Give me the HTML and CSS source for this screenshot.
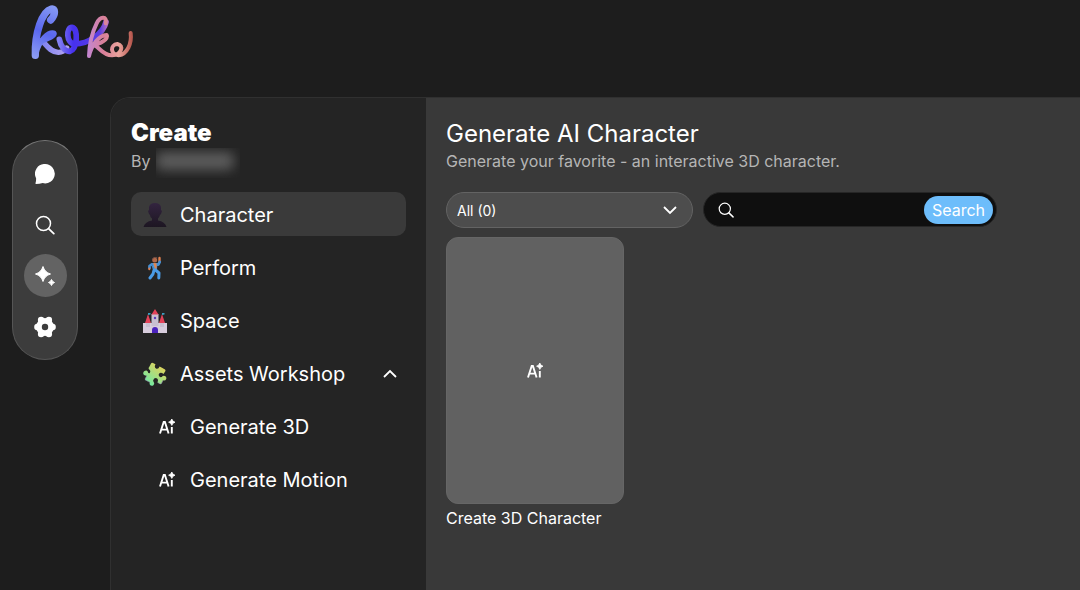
FILE: index.html
```html
<!DOCTYPE html>
<html lang="en">
<head>
  <meta charset="UTF-8">
  <meta name="viewport" content="width=device-width, initial-scale=1">
  <title>Generate AI Character</title>
  <link rel="stylesheet" href="styles.css">
</head>
<body>
  <svg class="sprite" aria-hidden="true">
    <symbol id="ai" viewBox="0 0 16 16">
      <path d="M1 14.5 4.7 3h1.200l3.700 11.500M2.300 10.600h6M12.800 8v6.500" fill="none" stroke="currentColor" stroke-width="1.900"/>
      <path d="M12.800 0q.6 2.600 3.200 3.200-2.600.6-3.200 3.200-.6-2.600-3.200-3.200 2.600-.6 3.200-3.200z" fill="currentColor" stroke="currentColor" stroke-width=".8"/>
    </symbol>
    <symbol id="search" viewBox="0 0 20 20">
      <circle cx="8.5" cy="8.5" r="7" fill="none" stroke="currentColor" stroke-width="1.5"/>
      <path d="m13.6 13.6 5.2 5" fill="none" stroke="currentColor" stroke-width="1.8" stroke-linecap="round"/>
    </symbol>
  </svg>

  <header class="header">
    <a class="logo" href="#" aria-label="Home">
      <svg viewBox="0 0 390 210" fill="none" stroke-linecap="round" stroke-linejoin="round">
        <defs>
          <linearGradient id="k1" gradientUnits="userSpaceOnUse" x1="40" y1="170" x2="105" y2="25">
            <stop offset="0" stop-color="#8c9cf4"/>
            <stop offset=".5" stop-color="#5a67ee"/>
            <stop offset="1" stop-color="#8497f4"/>
          </linearGradient>
          <linearGradient id="k2" gradientUnits="userSpaceOnUse" x1="60" y1="0" x2="135" y2="0">
            <stop offset="0" stop-color="#7b80f0"/>
            <stop offset="1" stop-color="#b0a2f0"/>
          </linearGradient>
          <linearGradient id="k3" gradientUnits="userSpaceOnUse" x1="115" y1="0" x2="262" y2="0">
            <stop offset="0" stop-color="#8583f2"/>
            <stop offset=".3" stop-color="#4631ee"/>
            <stop offset=".85" stop-color="#5b3fe0"/>
            <stop offset="1" stop-color="#b46cc8"/>
          </linearGradient>
          <linearGradient id="k4" gradientUnits="userSpaceOnUse" x1="205" y1="0" x2="335" y2="0">
            <stop offset="0" stop-color="#c486cf"/>
            <stop offset=".35" stop-color="#d97f98"/>
            <stop offset=".7" stop-color="#eaa39c"/>
            <stop offset="1" stop-color="#b85a50"/>
          </linearGradient>
        </defs>
        <path d="M66 122C78 134 92 158 116 157C128 157 134 152 140 144" stroke="url(#k2)" stroke-width="16"/>
        <path d="M92 60C108 42 106 24 94 27C66 34 44 100 46 166" stroke="url(#k1)" stroke-width="22"/>
        <path d="M48 160C58 118 86 96 101 99C108 106 82 116 68 122" stroke="url(#k1)" stroke-width="16"/>
        <path d="M118 118C122 138 134 156 150 154C172 148 176 84 156 82C138 82 138 130 164 132C206 132 250 100 258 66" stroke="url(#k3)" stroke-width="17"/>
        <path d="M257 70C262 46 240 50 230 70C216 98 208 138 207 168C214 136 236 106 260 105C268 116 238 134 222 134C236 140 248 166 276 166C304 164 314 136 292 132C270 134 270 164 296 166C322 162 336 130 332 99" stroke="url(#k4)" stroke-width="12"/>
      </svg>
    </a>
  </header>

  <div class="layout">
    <div class="side">
      <nav class="rail" aria-label="Main">
        <a class="rail-link" href="#" aria-label="Chat">
          <svg width="20" height="20" viewBox="0 0 20 20" fill="currentColor"><path d="M10.300 0a9.700 9.700 0 1 1-2.600 19.100Q4.500 20 1 20q-.8 0-.5-.8.700-1.900.6-5A9.700 9.700 0 0 1 10.300 0z"/></svg>
        </a>
        <a class="rail-link" href="#" aria-label="Search">
          <svg width="20" height="20"><use href="#search"/></svg>
        </a>
        <a class="rail-link active" href="#" aria-label="Create">
          <svg width="22" height="22" viewBox="0 0 22 22" fill="currentColor" stroke="currentColor" stroke-linejoin="round"><path d="M9 1.500q1.700 5.800 7.500 7.500-5.800 1.700-7.500 7.500-1.700-5.800-7.500-7.500 5.800-1.700 7.500-7.500zM17.500 14.500q.7 2.300 3 3-2.300.7-3 3-.7-2.300-3-3 2.300-.7 3-3z"/></svg>
        </a>
        <a class="rail-link" href="#" aria-label="Settings">
          <svg width="22" height="22" viewBox="0 0 22 22" fill="currentColor">
            <circle cx="11" cy="11" r="9"/>
            <circle cx="18.600" cy="11" r="3.200"/>
            <circle cx="3.400" cy="11" r="3.200"/>
            <circle cx="14.900" cy="4" r="3.200"/>
            <circle cx="7.100" cy="4" r="3.200"/>
            <circle cx="14.900" cy="18" r="3.200"/>
            <circle cx="7.100" cy="18" r="3.200"/>
            <circle cx="11" cy="11" r="3.200" fill="#3c3c3c"/>
          </svg>
        </a>
      </nav>
    </div>

    <div class="panel">
      <aside class="menu">
        <h1 class="menu-title">Create</h1>
        <p class="author">By <span class="author-name"></span></p>
        <nav class="menu-list" aria-label="Create">
          <a class="menu-item selected" href="#">
            <svg width="24" height="24" viewBox="0 0 24 24">
              <defs><linearGradient id="bust" x1="0" y1="0" x2="0" y2="1"><stop offset="0" stop-color="#33243f"/><stop offset="1" stop-color="#1d1622"/></linearGradient></defs>
              <path d="M6 4q1-4 6-4t6 4v3l1 1-1 3-1 1q-1 3-2 3.500v2q7 1 8.500 6.500H0.500Q2 18.500 9 17.500v-2Q7 14 7 12l-1-1-1-3 1-1z" fill="url(#bust)"/>
            </svg>
            Character
          </a>
          <a class="menu-item" href="#">
            <svg width="24" height="24" viewBox="0 0 24 24" fill="none" stroke-linecap="round" stroke-linejoin="round">
              <path d="M16.500 5.500V2" stroke="#e0804f" stroke-width="2.400"/>
              <path d="M12 8.500 15.500 8.500l1.200-2.500M8.500 8.500l-2 1.500v2" stroke="#458ed2" stroke-width="2.800"/>
              <path d="M6.300 12.500v.8" stroke="#e0804f" stroke-width="2"/>
              <path d="M9 7.500h5l-.5 5.500h-3z" fill="#4698df" stroke="#458ed2"/>
              <path d="m10.200 7 3.300.2.200 5.300-1.700.5z" fill="#e08550"/>
              <circle cx="11.700" cy="4" r="2.500" fill="#b0694a"/>
              <path d="M9.600 3q1-2.500 4.300-1.200" stroke="#7a5248"/>
              <path d="m11 14-1 4-3 4M12.500 14l3.500 3-.2 5" stroke="#4a9be6" stroke-width="3"/>
            </svg>
            Perform
          </a>
          <a class="menu-item" href="#">
            <svg width="24" height="24" viewBox="0 0 24 24">
              <path d="M0 14h3v1.500h2V14h14v1.500h2V14h3v10H0z" fill="#d8cddd"/>
              <path d="M3 13h4v5H3zM17 13h4v5h-4zM8.500 5h7v12h-7z" fill="#c9bfd1"/>
              <path d="M12 0l3.500 5.500h-7zM5 5l3 9H2zM19 5l3 9h-6z" fill="#e34259"/>
              <path d="M5 6V4h2.500v1.500zM19 6V4h2.500v1.500z" fill="#3c9fc0"/>
              <path d="M9 24v-3a3 3 0 0 1 6 0v3z" fill="#4a22bd"/>
              <circle cx="12" cy="9" r="1.200" fill="#5c3bb8"/>
            </svg>
            Space
          </a>
          <a class="menu-item" href="#">
            <svg width="24" height="24" viewBox="0 0 24 24">
              <defs><linearGradient id="puzzle" gradientUnits="userSpaceOnUse" x1="20" y1="2" x2="4" y2="22"><stop offset="0" stop-color="#ecd055"/><stop offset="1" stop-color="#6eeaa4"/></linearGradient></defs>
              <path d="M6.500 4.500 8 1.500q.8-1 2-.5l2.500 1.300q-1.700 3.200.7 4.400 2.300.8 3.400-2.200L19 5.700 22 7.500q.8.6.3 1.700L20.500 12q-2.700-2.400-4.300-.5-1.500 2.500 1.300 3.800l1.300-.2q1-1.900 3.100-1.200 2 .9 1.300 3t-3.200 1.400L18.500 21.500q-.6.800-1.500.4l-2.600-1.400q1.500-3.200-.8-4.300-2.400-.8-3.500 2.300l.5 1.600q1.300 1.600-.2 3.100-1.800 1.200-3.400-.3-.8-1.600-.1-2.600L2.500 18.200q-.8-.5-.4-1.500l1.600-3Q.3 13.500.2 11.200.6 8.400 3.500 8.500q1.800.8 1.700 2.400l1.500.3q1.300-2.200-.2-3.400Q4.700 6.500 6.500 4.500z" fill="url(#puzzle)"/>
              <path d="m3.800 13.700-1.600 3.200q-.2.800.5 1.100l4.300 2.500M15 20.500l2.300 1.300q.8.200 1.200-.4l1.600-3" fill="none" stroke="#8e84ad" stroke-width=".6"/>
            </svg>
            Assets Workshop
            <svg class="chevron" width="16" height="16" viewBox="0 0 16 16"><path d="m2 11 6-6 6 6" fill="none" stroke="currentColor" stroke-width="1.800"/></svg>
          </a>
          <a class="menu-item sub" href="#">
            <svg width="16" height="16"><use href="#ai"/></svg>
            Generate 3D
          </a>
          <a class="menu-item sub" href="#">
            <svg width="16" height="16"><use href="#ai"/></svg>
            Generate Motion
          </a>
        </nav>
      </aside>

      <main class="content">
        <h2 class="content-title">Generate AI Character</h2>
        <p class="subtitle">Generate your favorite - an interactive 3D character.</p>
        <form class="filters">
          <div class="select-box">
            <select class="filter" aria-label="Filter characters">
              <option>All (0)</option>
            </select>
            <svg class="select-arrow" width="14" height="14" viewBox="0 0 14 14"><path d="m1 4 6 6 6-6" fill="none" stroke="currentColor" stroke-width="1.800"/></svg>
          </div>
          <div class="search">
            <svg width="16" height="16"><use href="#search"/></svg>
            <input class="search-input" type="search" aria-label="Search characters">
            <button class="search-button" type="button">Search</button>
          </div>
        </form>
        <a class="card" href="#">
          <span class="card-cover"><svg width="16" height="16"><use href="#ai"/></svg></span>
          <span class="card-name">Create 3D Character</span>
        </a>
      </main>
    </div>
  </div>
</body>
</html>
```
FILE: styles.css
```css
* {
  box-sizing: border-box;
}
body {
  margin: 0;
  min-height: 100vh;
  display: flex;
  flex-direction: column;
  background-color: #1d1d1d;
  color: #fff;
  font-family: Inter, "Liberation Sans", sans-serif;
}
h1, h2, p {
  margin: 0;
}
a {
  color: inherit;
  text-decoration: none;
}
svg {
  display: block;
  flex-shrink: 0;
}
.sprite {
  position: absolute;
  width: 0;
  height: 0;
}
.header {
  height: 97px;
  padding: 0 20px;
}
.logo {
  display: block;
  width: 130px;
}
.layout {
  flex: 1;
  display: flex;
}
.side {
  width: 110px;
  padding: 43px 0 0 12px;
}
.rail {
  width: 66px;
  padding: 11px 0;
  display: flex;
  flex-direction: column;
  align-items: center;
  gap: 8px;
  border: 1px solid #555;
  border-top-color: #777;
  border-radius: 33px;
  background-color: #3c3c3c;
}
.rail-link {
  width: 43px;
  height: 43px;
  display: flex;
  align-items: center;
  justify-content: center;
  border-radius: 50%;
}
.rail-link.active {
  background-color: #636363;
}
.panel {
  flex: 1;
  display: flex;
  border: 1px solid #303030;
  border-width: 1px 0 0 1px;
  border-top-left-radius: 20px;
  overflow: hidden;
}
.menu {
  width: 315px;
  padding: 20px;
  background-color: #242424;
}
.menu-title {
  font-size: 24px;
  line-height: 30px;
  font-weight: 900;
}
.author {
  display: flex;
  align-items: flex-start;
  gap: 6px;
  height: 30px;
  font-size: 16px;
  line-height: 26px;
  color: #b5b5b5;
}
.author-name {
  width: 84px;
  height: 30px;
  padding: 4px 6px 8px 0;
  overflow: hidden;
}
.author-name::before {
  content: "";
  display: block;
  height: 18px;
  border-radius: 6px;
  background-color: #5c5c5c;
  filter: blur(6px);
}
.menu-list {
  margin-top: 14px;
  display: flex;
  flex-direction: column;
  gap: 9px;
}
.menu-item {
  height: 44px;
  padding: 2px 8px 0 12px;
  display: flex;
  align-items: center;
  gap: 13px;
  border-radius: 10px;
  font-size: 20px;
}
.menu-item.selected {
  background-color: #3a3a3a;
}
.menu-item.sub {
  padding-left: 28px;
  gap: 15px;
}
.chevron {
  margin-left: auto;
}
.content {
  flex: 1;
  padding: 20px;
  background-color: #393939;
}
.content-title {
  font-size: 24px;
  line-height: 31px;
  font-weight: 400;
}
.subtitle {
  font-size: 16px;
  line-height: 24px;
  color: #b5b5b5;
}
.filters {
  margin-top: 19px;
  display: flex;
  gap: 10px;
}
.select-box {
  display: grid;
  align-items: center;
  width: 247px;
}
.select-box > * {
  grid-area: 1 / 1;
}
.filter {
  appearance: none;
  width: 100%;
  height: 36px;
  padding: 0 10px;
  border: 1px solid #636363;
  border-radius: 18px;
  background-color: #4d4d4d;
  color: #fff;
  font: 14px Inter, sans-serif;
}
.select-arrow {
  justify-self: end;
  margin-right: 16px;
  pointer-events: none;
}
.search {
  width: 294px;
  height: 35px;
  padding: 0 3px 0 14px;
  display: flex;
  align-items: center;
  gap: 8px;
  border: 1px solid #262626;
  border-radius: 18px;
  background-color: #0f0f0f;
}
.search-input {
  flex: 1;
  min-width: 0;
  border: 0;
  outline: 0;
  background: none;
  color: #fff;
  font: 16px Inter, sans-serif;
}
.search-button {
  height: 28px;
  padding: 0 8px;
  border: 0;
  border-radius: 14px;
  background-color: #6dbdfb;
  color: #fff;
  font: 16px Inter, sans-serif;
}
.card {
  display: block;
  width: 178px;
  margin-top: 9px;
}
.card-cover {
  display: flex;
  align-items: center;
  justify-content: center;
  aspect-ratio: 2 / 3;
  border: 1px solid #666;
  border-radius: 12px;
  background-color: #616161;
}
.card-name {
  display: block;
  font-size: 16px;
  line-height: 28px;
}
```
